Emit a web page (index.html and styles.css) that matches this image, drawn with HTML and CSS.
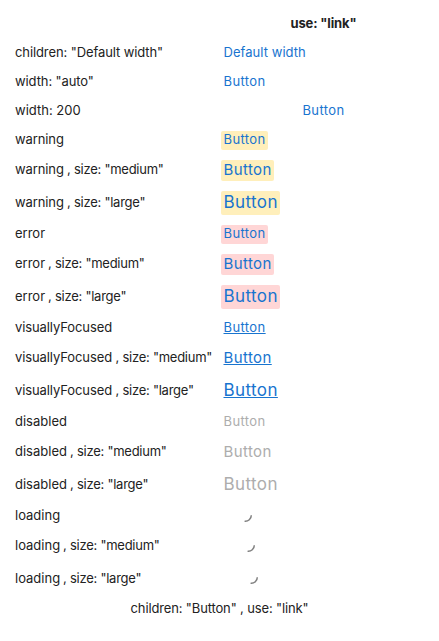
FILE: index.html
```
<!DOCTYPE html>
<html lang="en">
<head>
<meta charset="utf-8">
<title>Button link states</title>
<link rel="stylesheet" href="styles.css">
</head>
<body>
<main class="states">
<div class="row head"><span></span><strong>use: "link"</strong></div>
<div class="row"><span class="label tight">children: "Default width"</span><span class="cell"><a class="link text">Default width</a></span></div>
<div class="row"><span class="label tight">width: "auto"</span><span class="cell"><a class="link">Button</a></span></div>
<div class="row"><span class="label">width: 200</span><span class="cell wide"><a class="link">Button</a></span></div>
<div class="row"><span class="label"><span class="warn">warning</span></span><span class="cell"><a class="link warning">Button</a></span></div>
<div class="row medium"><span class="label"><span class="warn">warning</span><span class="size">, size: "medium"</span></span><span class="cell"><a class="link warning">Button</a></span></div>
<div class="row large"><span class="label"><span class="warn">warning</span><span class="size">, size: "large"</span></span><span class="cell"><a class="link warning">Button</a></span></div>
<div class="row"><span class="label"><span class="err">error</span></span><span class="cell"><a class="link error">Button</a></span></div>
<div class="row medium"><span class="label"><span class="err">error</span><span class="size">, size: "medium"</span></span><span class="cell"><a class="link error">Button</a></span></div>
<div class="row large"><span class="label"><span class="err">error</span><span class="size">, size: "large"</span></span><span class="cell"><a class="link error">Button</a></span></div>
<div class="row"><span class="label"><span class="foc">visuallyFocused</span></span><span class="cell"><a class="link focused">Button</a></span></div>
<div class="row medium"><span class="label"><span class="foc">visuallyFocused</span><span class="size">, size: "medium"</span></span><span class="cell"><a class="link focused">Button</a></span></div>
<div class="row large"><span class="label"><span class="foc">visuallyFocused</span><span class="size">, size: "large"</span></span><span class="cell"><a class="link focused">Button</a></span></div>
<div class="row"><span class="label"><span class="dis">disabled</span></span><span class="cell"><a class="link disabled">Button</a></span></div>
<div class="row medium"><span class="label"><span class="dis">disabled</span><span class="size">, size: "medium"</span></span><span class="cell"><a class="link disabled">Button</a></span></div>
<div class="row large"><span class="label"><span class="dis">disabled</span><span class="size">, size: "large"</span></span><span class="cell"><a class="link disabled">Button</a></span></div>
<div class="row"><span class="label"><span class="load">loading</span></span><span class="cell busy"><svg class="spinner" viewBox="0 0 16 16"><path d="M14.3 8.2A6 6 0 0 1 7.6 14.2"/></svg></span></div>
<div class="row medium"><span class="label"><span class="load">loading</span><span class="size">, size: "medium"</span></span><span class="cell busy"><svg class="spinner" viewBox="0 0 16 16"><path d="M14.3 8.2A6 6 0 0 1 7.6 14.2"/></svg></span></div>
<div class="row large"><span class="label"><span class="load">loading</span><span class="size">, size: "large"</span></span><span class="cell busy"><svg class="spinner" viewBox="0 0 16 16"><path d="M14.3 8.2A6 6 0 0 1 7.6 14.2"/></svg></span></div>
<div class="caption">children: "Button" , use: "link"</div>
</main>
</body>
</html>
```
FILE: styles.css
```
body {
  margin: 0;
  background: #fff;
  color: #222;
  font: 13px/20px Inter, "Liberation Sans", sans-serif;
}
.states { padding: 8px 15px 0; }
.row {
  display: grid;
  grid-template-columns: 208.5px 200px;
  align-items: center;
  height: 29px;
  white-space: pre;
}
.head strong { text-align: center; font-weight: 700; letter-spacing: -0.15px; }
.medium { height: 31px; }
.large { height: 34px; }
.label { display: flex; }
.tight { letter-spacing: -0.1px; }
.size { letter-spacing: -0.25px; }
.medium .label, .large .label { padding-top: 1px; }
.warn { width: 52px; letter-spacing: -0.1px; }
.err { width: 33px; }
.foc { width: 100.5px; letter-spacing: -0.1px; }
.dis { width: 55px; }
.load { width: 48px; }
.cell { display: flex; }
.wide { justify-content: center; }
.link {
  color: #1874cf;
  text-decoration: none;
  letter-spacing: 0.4px;
}
.link.text { letter-spacing: 0.05px; }
.medium .link { font-size: 15px; }
.large .link { font-size: 17px; }
.warning, .error {
  margin: 4px 0 0 -2.5px;
  padding: 0 2.5px 2px;
  border-radius: 2px;
  line-height: 17px;
}
.medium .warning, .medium .error { line-height: 19px; }
.large .warning, .large .error { line-height: 22px; }
.warning { background: #ffefbb; }
.error { background: #ffd6d6; }
.medium .focused, .medium .disabled { padding-top: 2px; }
.large .focused, .large .disabled { padding-top: 1px; }
.focused { text-decoration: underline 1px; text-underline-offset: 1px; }
.disabled { color: #adadad; }
.busy { justify-content: center; width: 42px; }
.medium .busy { width: 49px; }
.large .busy { width: 55px; }
.spinner { width: 16px; height: 16px; fill: none; stroke: #808080; stroke-width: 1.5; }
.caption { height: 30px; line-height: 28px; text-align: center; letter-spacing: -0.14px; }
```
